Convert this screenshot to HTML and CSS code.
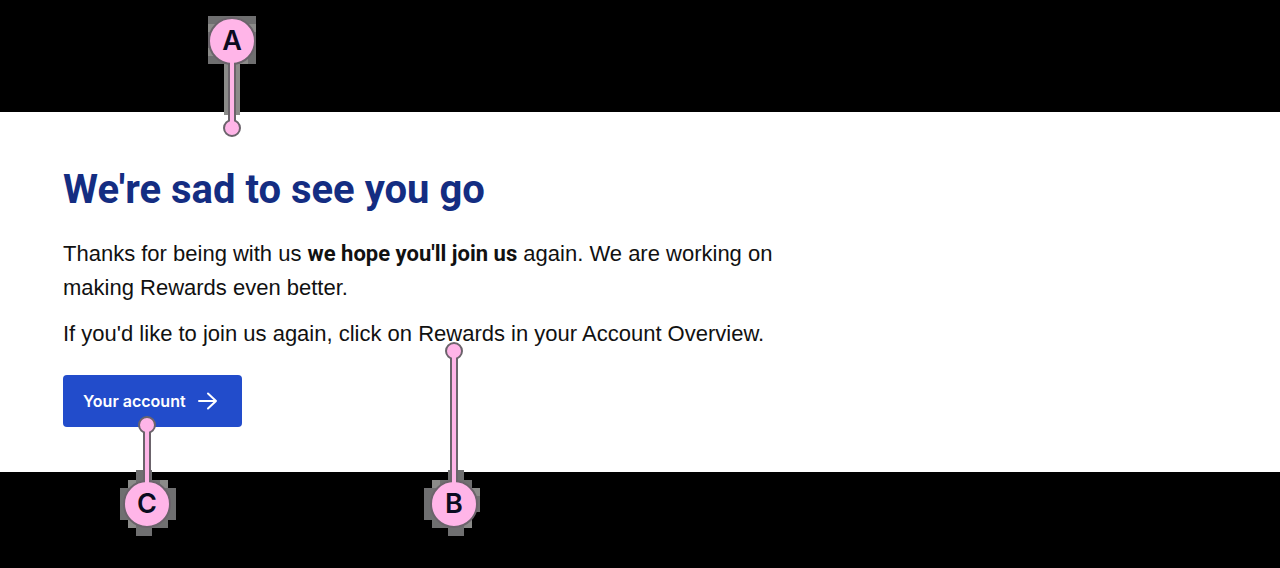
FILE: index.html
```html
<!DOCTYPE html>
<html lang="en">
<head>
<meta charset="utf-8">
<meta name="viewport" content="width=device-width, initial-scale=1">
<title>We're sad to see you go</title>
<link rel="stylesheet" href="styles.css">
</head>
<body>
<main class="stage">
  <section class="banner">
    <h1 class="banner-title">We're sad to see you go</h1>
    <div class="banner-copy">
      <p>Thanks for being with us <strong>we hope you'll join us</strong> again. We are working on making Rewards even better.</p>
      <p>If you'd like to join us again, click on Rewards in your Account Overview.</p>
    </div>
    <a class="button" href="#account">Your account
      <svg class="button-arrow" viewBox="0 0 20 18" aria-hidden="true"><path d="M1 9H18M10 1.5L18 9L10 16.5"/></svg>
    </a>
  </section>

  <svg class="marker marker-a" viewBox="204 12 56 128" role="img" aria-label="A">
    <path class="halo" d="M208 16H256V64H240V115H224V64H208Z"/>
    <path class="halo-light" d="M224 64H240V115H224ZM208 24H216V32H208ZM248 24H256V32H248ZM208 48H216V56H208ZM240 56H248V64H240Z"/>
    <path class="outline" d="M232 41V128"/>
    <circle class="dot" cx="232" cy="128" r="8"/>
    <circle class="dot" cx="232" cy="41" r="23"/>
    <path class="stem" d="M232 60V126"/>
    <text class="letter" x="232" y="50">A</text>
  </svg>
  <svg class="marker marker-b" viewBox="420 340 64 200" role="img" aria-label="B">
    <path class="halo" d="M448 470H464V480H472V488H480V512H472V528H464V536H448V528H432V520H424V488H432V480H448Z"/>
    <path class="halo-light" d="M432 480H440V488H432ZM472 488H480V496H472ZM464 520H472V528H464Z"/>
    <path class="outline" d="M454 351V504"/>
    <circle class="dot" cx="454" cy="351" r="8"/>
    <circle class="dot" cx="454" cy="504" r="23"/>
    <path class="stem" d="M454 353V486"/>
    <text class="letter" x="454" y="513">B</text>
  </svg>
  <svg class="marker marker-c" viewBox="116 414 64 126" role="img" aria-label="C">
    <path class="halo" d="M136 470H152V480H168V488H176V520H168V528H152V536H136V528H128V520H120V488H128V480H136Z"/>
    <path class="halo-light" d="M128 480H136V488H128ZM160 480H168V488H160ZM128 520H136V528H128Z"/>
    <path class="outline" d="M147 425V504"/>
    <circle class="dot" cx="147" cy="425" r="8"/>
    <circle class="dot" cx="147" cy="504" r="23"/>
    <path class="stem" d="M147 427V486"/>
    <text class="letter" x="147" y="513">C</text>
  </svg>
</main>
</body>
</html>
```
FILE: styles.css
```css
* { box-sizing: border-box; }
body {
  margin: 0;
  background: #000;
  font-family: "Liberation Sans", Arial, sans-serif;
}
.stage {
  position: relative;
  padding: 112px 0 96px;
}
.banner {
  padding: 52px 63px 45px;
  background: #fff;
  color: #111;
}
.banner-title {
  margin: 0 0 21px;
  color: #142d82;
  font-family: Roboto, "Liberation Sans", sans-serif;
  font-size: 40px;
  font-weight: 700;
  line-height: 52px;
}
.banner-copy {
  max-width: 736px;
  font-size: 22px;
  line-height: 34px;
}
.banner-copy p { margin: 0 0 12px; }
.banner-copy strong {
  font-family: Roboto, "Liberation Sans", sans-serif;
  font-weight: 700;
}
.button {
  display: inline-flex;
  align-items: center;
  gap: 12px;
  margin-top: 12px;
  padding: 0 24px 0 20px;
  border-radius: 4px;
  background: #224ccb;
  color: #fff;
  font-family: Inter, "Liberation Sans", sans-serif;
  font-size: 16px;
  font-weight: 600;
  line-height: 52px;
  text-decoration: none;
  vertical-align: top;
}
.button-arrow {
  width: 20px;
  height: 18px;
  fill: none;
  stroke: #fff;
  stroke-width: 2;
  stroke-linecap: round;
  stroke-linejoin: round;
}
.marker { position: absolute; }
.marker-a { left: 204px; top: 12px; width: 56px; height: 128px; }
.marker-b { left: 420px; top: 340px; width: 64px; height: 200px; }
.marker-c { left: 116px; top: 414px; width: 64px; height: 126px; }
.halo { fill: #6f6f70; }
.halo-light { fill: #8b8b89; }
.outline { stroke: #6b636b; stroke-width: 8; }
.stem { stroke: #ffb5e8; stroke-width: 4; }
.dot { fill: #ffb5e8; stroke: #6b636b; stroke-width: 2; }
.letter {
  fill: #0b0b20;
  font-family: Inter, "Liberation Sans", sans-serif;
  font-size: 27px;
  font-weight: 600;
  text-anchor: middle;
}
```
